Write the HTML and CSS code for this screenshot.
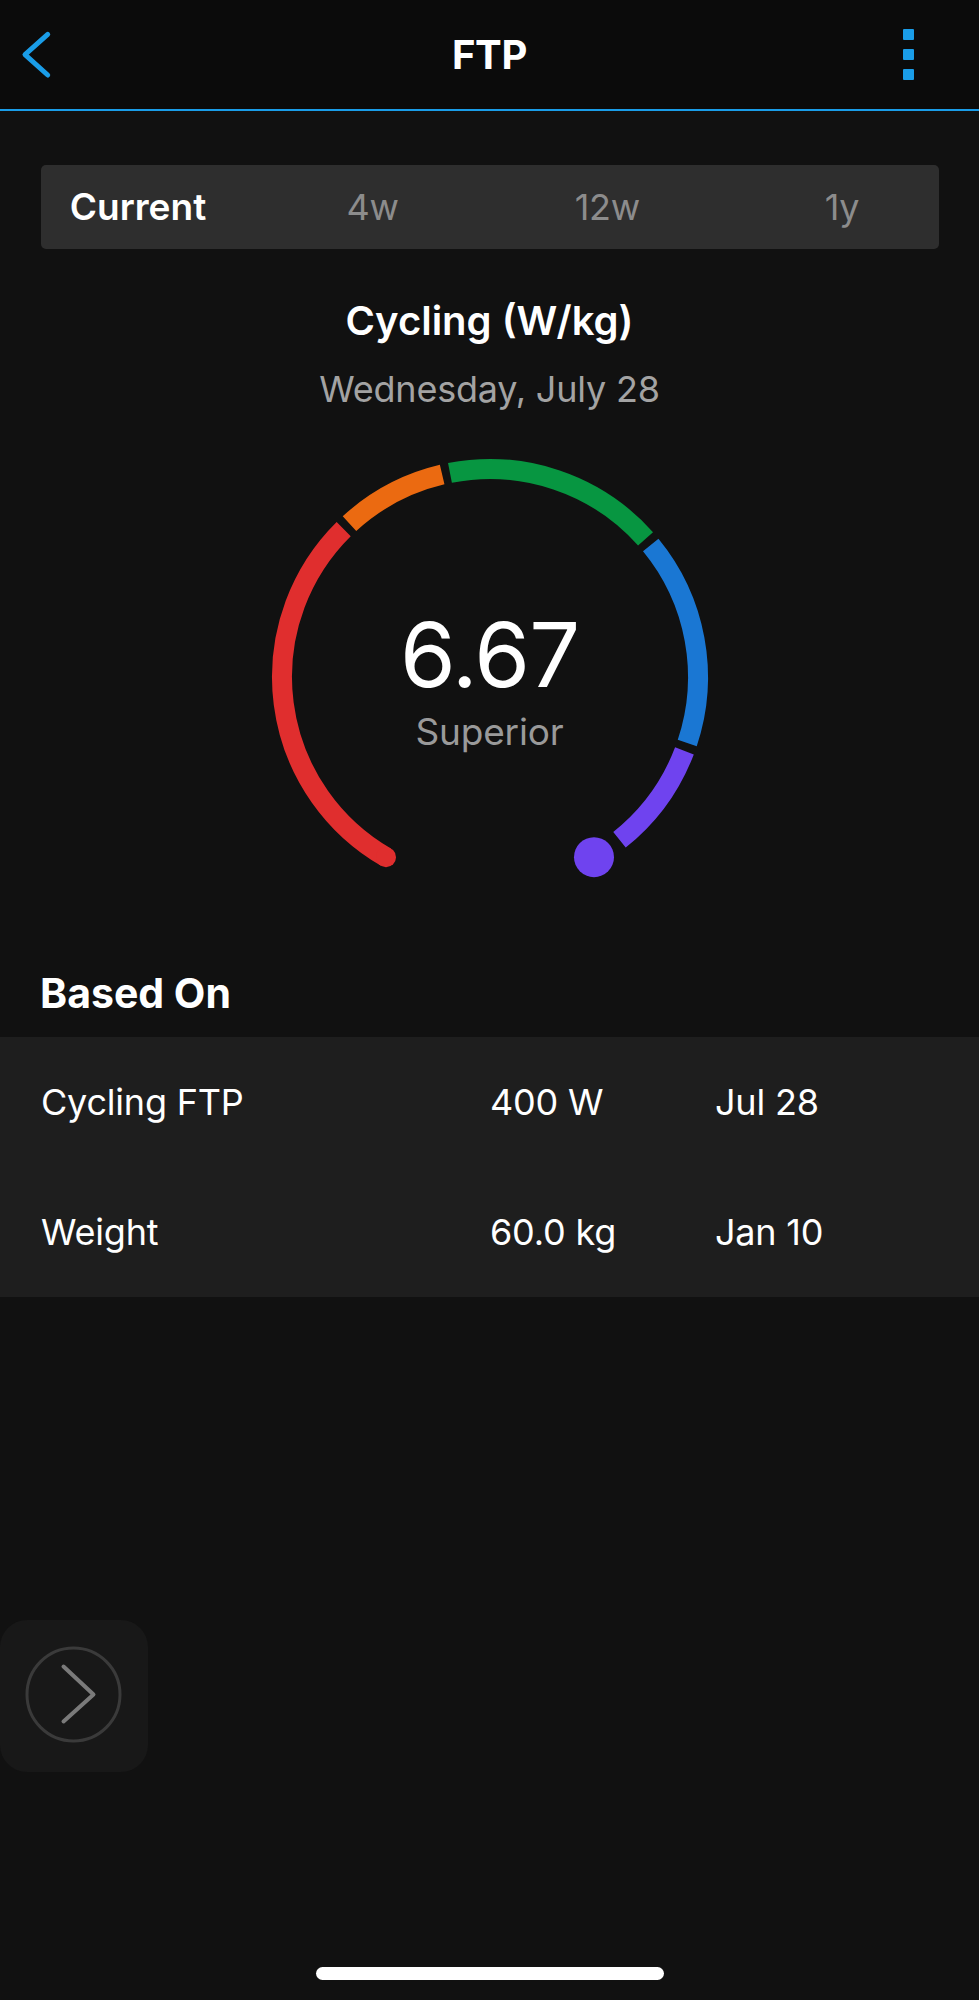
FILE: index.html
```html
<!DOCTYPE html>
<html lang="en">
<head>
<meta charset="utf-8">
<title>FTP</title>
<link rel="stylesheet" href="styles.css">
</head>
<body>
<div class="screen">
  <header class="topbar">
    <div class="topbar-left">
      <svg class="back-icon" width="34" height="52" viewBox="0 0 34 52" aria-hidden="true">
        <path d="M27.7 5.3 L5 25.6 L27.7 46" fill="none" stroke="#1a9de8" stroke-width="5" stroke-linecap="round" stroke-linejoin="round"/>
      </svg>
    </div>
    <h1 class="topbar-title">FTP</h1>
    <div class="topbar-right">
      <svg class="menu-icon" width="11" height="51" viewBox="0 0 11 51" aria-hidden="true">
        <rect x="0" y="0" width="11" height="11" rx="1" fill="#1a9de8"/>
        <rect x="0" y="20" width="11" height="11" rx="1" fill="#1a9de8"/>
        <rect x="0" y="40" width="11" height="11" rx="1" fill="#1a9de8"/>
      </svg>
    </div>
  </header>

  <main class="content">
    <nav class="tabs">
      <span class="tab tab-active">Current</span>
      <span class="tab">4w</span>
      <span class="tab">12w</span>
      <span class="tab">1y</span>
    </nav>

    <section class="summary">
      <h2 class="summary-title">Cycling (W/kg)</h2>
      <p class="summary-date">Wednesday, July 28</p>
      <div class="gauge">
        <svg class="gauge-svg" width="460" height="460" viewBox="0 0 460 460" aria-hidden="true">
          <g fill="none" stroke-width="20" stroke-linecap="butt">
            <path d="M126 410.13 A208 208 0 0 1 83.69 82.15" stroke="#e02e2e"/>
            <path d="M89.48 76.65 A208 208 0 0 1 182.15 27.58" stroke="#eb6a11"/>
            <path d="M189.96 25.89 A208 208 0 0 1 385.54 91.90" stroke="#079641"/>
            <path d="M390.73 97.99 A208 208 0 0 1 427.25 296" stroke="#1a77d3"/>
            <path d="M424.44 303.86 A208 208 0 0 1 359.48 392.78" stroke="#6f43ef"/>
          </g>
          <circle cx="126" cy="410.13" r="10" fill="#e02e2e"/>
          <circle cx="334" cy="410.13" r="20" fill="#6f43ef"/>
        </svg>
        <div class="gauge-center">
          <div class="gauge-value">6.67</div>
          <div class="gauge-label">Superior</div>
        </div>
      </div>
    </section>

    <h3 class="section-title">Based On</h3>
    <ul class="list">
      <li class="list-row">
        <span class="cell-label">Cycling FTP</span>
        <span class="cell-value">400 W</span>
        <span class="cell-date">Jul 28</span>
      </li>
      <li class="list-row">
        <span class="cell-label">Weight</span>
        <span class="cell-value">60.0 kg</span>
        <span class="cell-date">Jan 10</span>
      </li>
    </ul>
  </main>

  <button class="fab" type="button" aria-label="Next">
    <svg width="100" height="100" viewBox="0 0 100 100" aria-hidden="true">
      <circle cx="48.5" cy="48.5" r="46.5" fill="none" stroke="#3a3a3a" stroke-width="3"/>
      <path d="M38.5 20.5 L68.5 48.5 L38.5 75.5" fill="none" stroke="#7a7a7a" stroke-width="4" stroke-linecap="round" stroke-linejoin="round"/>
    </svg>
  </button>

  <div class="home-indicator"></div>
</div>
</body>
</html>
```

FILE: styles.css
```css
* {
  box-sizing: border-box;
}

html, body {
  margin: 0;
  padding: 0;
  background: #111111;
}

body {
  font-family: Inter, "Noto Sans", "Liberation Sans", sans-serif;
  color: #ffffff;
}

.screen {
  position: relative;
  width: 979px;
  height: 2000px;
  overflow: hidden;
  background: #111111;
}

/* Header */
.topbar {
  display: grid;
  grid-template-columns: 1fr auto 1fr;
  align-items: center;
  height: 111px;
  background: #0b0b0b;
  border-bottom: 2px solid #1a9de8;
}

.topbar-left {
  display: flex;
  justify-content: flex-start;
  padding-left: 20px;
}

.topbar-right {
  display: flex;
  justify-content: flex-end;
  padding-right: 65px;
}

.back-icon,
.menu-icon {
  display: block;
}

.topbar-title {
  margin: 0;
  font-size: 40px;
  font-weight: 700;
  line-height: 48px;
  letter-spacing: -0.3px;
}

/* Tabs */
.tabs {
  display: flex;
  justify-content: space-between;
  align-items: center;
  margin: 54px 40px 0 41px;
  height: 84px;
  padding: 0 22px;
  background: #2e2e2e;
  border-radius: 5px;
}

.tab {
  width: 150px;
  text-align: center;
  font-size: 36px;
  line-height: 44px;
  color: #8c8c8c;
  letter-spacing: -0.3px;
}

.tab-active {
  color: #ffffff;
  font-weight: 600;
  font-size: 37px;
  letter-spacing: 0;
}

/* Summary */
.summary {
  display: flex;
  flex-direction: column;
  align-items: center;
}

.summary-title {
  margin: 48px 0 0;
  font-size: 40px;
  line-height: 48px;
  font-weight: 600;
  letter-spacing: 0;
}

.summary-date {
  margin: 22px 0 0;
  font-size: 36px;
  line-height: 44px;
  color: #a3a3a3;
  letter-spacing: -0.2px;
}

.gauge {
  display: grid;
  width: 460px;
  height: 460px;
  margin-top: 36px;
}

.gauge-svg,
.gauge-center {
  grid-area: 1 / 1;
}

.gauge-svg {
  display: block;
}

.gauge-center {
  display: flex;
  flex-direction: column;
  align-items: center;
  margin-top: 158px;
}

.gauge-value {
  font-size: 90px;
  line-height: 100px;
  font-weight: 400;
  letter-spacing: -1px;
}

.gauge-label {
  margin-top: 5px;
  font-size: 37px;
  line-height: 44px;
  color: #9a9a9a;
  letter-spacing: -0.2px;
}

/* Based on list */
.section-title {
  margin: 61px 0 0;
  padding-left: 40px;
  font-size: 41px;
  line-height: 50px;
  font-weight: 700;
  letter-spacing: 0;
}

.list {
  list-style: none;
  margin: 19px 0 0;
  padding: 0;
  background: #1e1e1e;
}

.list-row {
  display: grid;
  grid-template-columns: 449px 225px 1fr;
  align-items: center;
  height: 130px;
  padding-left: 41px;
  font-size: 36px;
  line-height: 130px;
  letter-spacing: -0.2px;
}

/* Floating button */
.fab {
  position: absolute;
  left: 0;
  top: 1620px;
  width: 148px;
  height: 152px;
  padding: 0 0 0 25px;
  border: none;
  border-radius: 27px;
  background: #181818;
  display: flex;
  align-items: center;
}

.fab svg {
  display: block;
}

/* Home indicator */
.home-indicator {
  position: absolute;
  left: 316px;
  top: 1967px;
  width: 348px;
  height: 13px;
  border-radius: 7px;
  background: #ffffff;
}
```
